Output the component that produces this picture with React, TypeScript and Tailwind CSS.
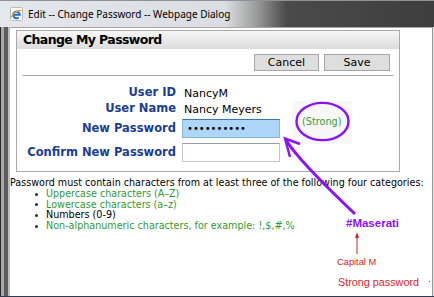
import React from "react";

const IeIcon = () => (
  <svg width="13" height="14" viewBox="0 0 13 14">
    <rect x="0.5" y="0.5" width="12" height="13" rx="1" fill="#fbfbfb" stroke="#bcbcbc" />
    <path d="M3.4 7.8h6.4a3.3 3.3 0 1 0-1.1 2.6" fill="none" stroke="#1f6fd3" strokeWidth="2" />
    <path d="M1.2 10.2c1.8-4 6.5-7.4 10.4-6.8" fill="none" stroke="#f2a01e" strokeWidth="1.3" />
  </svg>
);

const FormRow = ({ label, children, className = "" }: any) => (
  <div className={"flex items-center " + className}>
    <div className="w-[159px] text-right font-bold text-[11.5px] text-[#1b3d94] leading-none">{label}</div>
    {children}
  </div>
);

const rules = [
  { text: "Uppercase characters (A–Z)", green: true },
  { text: "Lowercase characters (a–z)", green: true },
  { text: "Numbers (0-9)", green: false },
  { text: "Non-alphanumeric characters, for example: !,$,#,%", green: true },
];

export default function App() {
  return (
    <div className="relative w-[434px] h-[297px] flex flex-col overflow-hidden bg-[#3a3a3a] font-['DejaVu_Sans',sans-serif] text-black">
      {/* title bar */}
      <div className="h-[27px] flex items-center pl-[10px] border-t border-[#8d9298] bg-[linear-gradient(to_right,#e4e7eb_0%,#dadde1_52%,#9c9c9c_59%,#4a4a4a_66%,#3e3e3e_100%)]">
        <IeIcon />
        <span className="ml-[5px] text-[10px] leading-none font-['Noto_Sans',sans-serif]">
          Edit -- Change Password -- Webpage Dialog
        </span>
      </div>

      <div className="flex flex-1 min-h-0">
        {/* left frame */}
        <div className="flex">
          <div className="w-[1px] bg-[#262626]" />
          <div className="w-[3px] bg-[#a9a9a9]" />
          <div className="w-[4px] bg-[#5d5d5d]" />
          <div className="w-[2px] bg-[#bdbdbd]" />
        </div>

        {/* client */}
        <div className="flex-1 bg-white border-t border-[#a7a7a7]">
          <div className="ml-[6px] mt-[2px] w-[384px] border border-[#a9a9a9]">
            <div className="h-[18px] flex items-center pl-[6px] bg-[linear-gradient(to_bottom,#f7f7f7,#dcdcdc)]">
              <span className="font-bold text-[12.5px] tracking-[-0.6px] leading-none">Change My Password</span>
            </div>
            <div className="flex justify-end gap-[5px] pr-[9px] mt-[5px]">
              <button className="w-[65px] h-[17px] bg-[#dedede] border border-[#a6a6a6] text-[11px] leading-none">Cancel</button>
              <button className="w-[66px] h-[17px] bg-[#dedede] border border-[#a6a6a6] text-[11px] leading-none">Save</button>
            </div>
            <div className="mx-[6px] mt-[4px] h-px bg-[#a3a3a3]" />

            <div className="mt-[9px] pb-[9px]">
              <FormRow label="User ID" className="h-[16px]">
                <span className="pl-[8px] text-[11px] leading-none">NancyM</span>
              </FormRow>
              <FormRow label="User Name" className="h-[16px]">
                <span className="pl-[8px] text-[11px] leading-none">Nancy Meyers</span>
              </FormRow>
              <FormRow label="New Password" className="mt-[2px] h-[19px]">
                <div className="ml-[6px] w-[98px] h-[19px] bg-[#aed6f8] border border-[#86b8e2] border-t-[#3b78b0] flex items-center pl-[4px] text-[10px] leading-none">
                  ••••••••••
                </div>
              </FormRow>
              <FormRow label="Confirm New Password" className="mt-[5px] h-[19px]">
                <div className="ml-[6px] w-[98px] h-[19px] bg-white border border-[#c4c6cc] border-t-[#9a9ca3]" />
              </FormRow>
            </div>
          </div>

          <div className="mt-[5px] text-[9.6px] leading-[11px]">
            Password must contain characters from at least three of the following four categories:
          </div>
          <ul className="mt-[1px] text-[9.6px] leading-[10.6px]">
            {rules.map((r) => (
              <li key={r.text} className="flex items-center">
                <span className="ml-[25px] w-[3px] h-[3px] rounded-full bg-[#1c3a1c]" />
                <span className={"ml-[8px] " + (r.green ? "text-[#339933]" : "text-black")}>{r.text}</span>
              </li>
            ))}
          </ul>
        </div>

        {/* right frame */}
        <div className="flex">
          <div className="w-[1px] bg-[#9a9a9a]" />
          <div className="w-[1px] bg-[#dedede]" />
        </div>
      </div>
      <div className="h-[1px] bg-[#2e3a52]" />

      {/* annotations */}
      <svg className="absolute left-0 top-0 pointer-events-none" width="434" height="297">
        <rect x="293" y="101" width="59" height="43" fill="#f7f7f7" />
        <ellipse cx="322.5" cy="121.5" rx="26" ry="18.6" fill="none" stroke="#8a12fc" strokeWidth="2.4" />
        <path d="M286 140 Q298 160 355 214" fill="none" stroke="#8a12fc" strokeWidth="3" />
        <path d="M300 144 L285 138.5 L290 157" fill="none" stroke="#8a12fc" strokeWidth="2.4" />
        <path d="M357 254 V235" stroke="#d9232e" strokeWidth="1" />
        <path d="M355 238 L357 232 L359 238 Z" fill="#d9232e" />
        <rect x="429" y="281" width="1" height="1" fill="#d9232e" />
      </svg>
      <span className="absolute left-[302px] top-[116px] text-[9.7px] leading-[12px] text-[#3a9a3a]">(Strong)</span>
      <span className="absolute left-[346px] top-[216px] font-['Liberation_Sans',sans-serif] font-bold text-[11.5px] leading-[14px] text-[#8a12fc]">
        #Maserati
      </span>
      <span className="absolute left-[337px] top-[256px] font-['Liberation_Sans',sans-serif] text-[9.3px] leading-[12px] text-[#d9232e]">
        Capital M
      </span>
      <span className="absolute left-[338px] top-[275px] font-['Liberation_Sans',sans-serif] text-[10.8px] leading-[14px] text-[#d9232e]">
        Strong password
      </span>
    </div>
  );
}
